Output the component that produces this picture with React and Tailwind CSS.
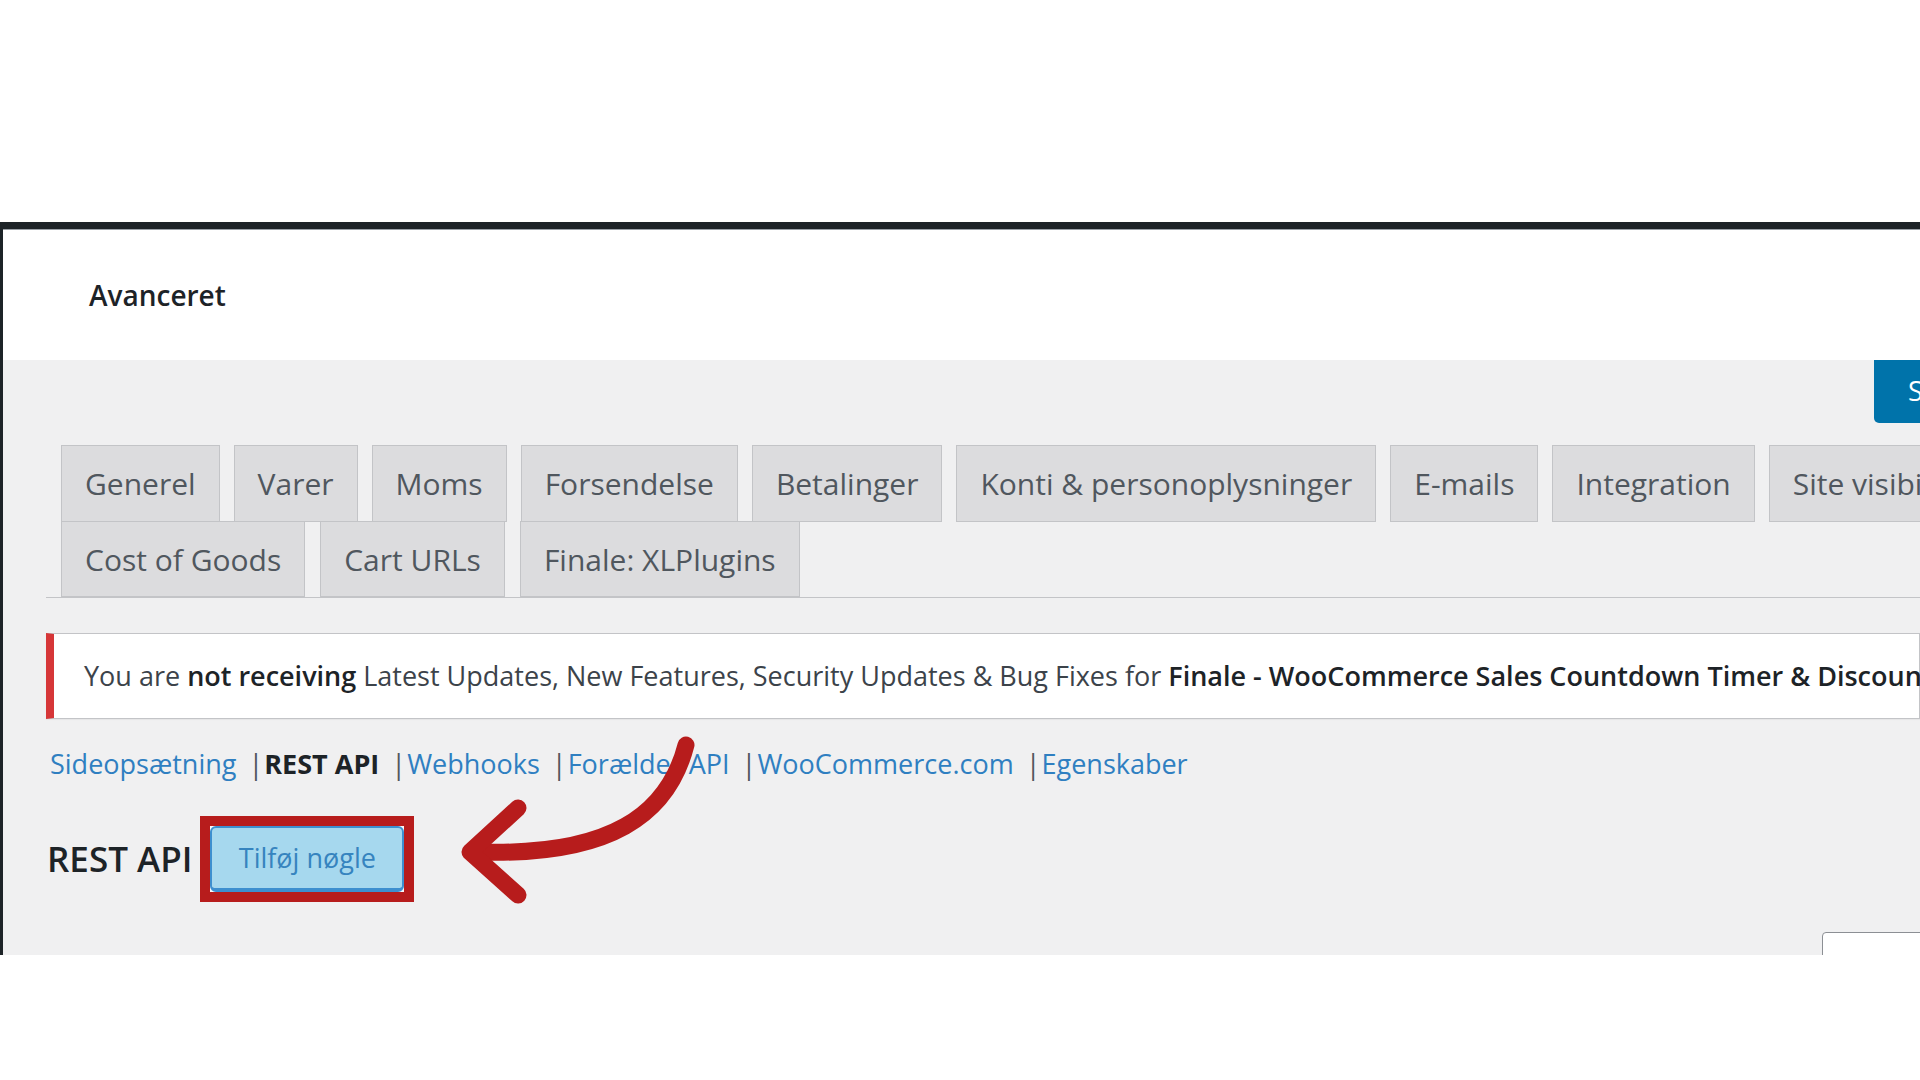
import React from 'react';

const font = { fontFamily: '"Open Sans", "Noto Sans", sans-serif' };

const rowOne = ['Generel', 'Varer', 'Moms', 'Forsendelse', 'Betalinger', 'Konti & personoplysninger', 'E-mails', 'Integration', 'Site visibility'];
const rowTwo = ['Cost of Goods', 'Cart URLs', 'Finale: XLPlugins'];

const links = [
  { label: 'Sideopsætning' },
  { label: 'REST API', current: true },
  { label: 'Webhooks' },
  { label: 'Forælder API' },
  { label: 'WooCommerce.com' },
  { label: 'Egenskaber', last: true },
];

function Tab({ label, tall }) {
  return (
    <div
      className={`flex items-center whitespace-nowrap border border-[#c3c4c7] bg-[#dcdcde] px-[23px] text-[30px] text-[#50575e] ${tall ? 'h-[77px]' : 'h-[76px]'}`}
    >
      {label}
    </div>
  );
}

export default function App() {
  return (
    <div className="relative h-[1080px] w-[1920px] overflow-hidden bg-white" style={font}>
      <div className="h-[222px]" />

      <div className="flex h-[733px] flex-col border-l-[3px] border-t-[7px] border-[#1d2327]">
        {/* header */}
        <div className="flex h-[131px] items-center border-t border-[#9aa0a6] bg-white pl-[86px]">
          <h1 className="text-[28px] font-semibold text-[#1d2327]">Avanceret</h1>
        </div>

        {/* settings area */}
        <div className="flex-1 overflow-hidden bg-[#f0f0f1]">
          <div className="flex h-[63px] justify-end">
            <button className="-mr-[204px] h-[63px] w-[250px] whitespace-nowrap rounded-bl-[5px] bg-[#0073aa] pl-[34px] text-left text-[27px] text-white">
              Save changes
            </button>
          </div>

          {/* tabs */}
          <div className="ml-[43px] mt-[22px] border-b border-[#c3c4c7] pl-[15px]">
            <div className="flex gap-[14px]">
              {rowOne.map((t) => (
                <Tab key={t} label={t} tall />
              ))}
            </div>
            <div className="-mt-px flex gap-[15px]">
              {rowTwo.map((t) => (
                <Tab key={t} label={t} />
              ))}
            </div>
          </div>

          {/* notice */}
          <div className="ml-[43px] mt-[35px] flex h-[86px] items-center whitespace-nowrap border border-l-[8px] border-[#c3c4c7] border-l-[#d63638] bg-white pl-[30px] text-[27px] text-[#3c434a] shadow-[0_1px_1px_rgba(0,0,0,0.04)]">
            <span>
              You are <b className="font-semibold text-[#1d2327]">not receiving</b> Latest Updates, New Features, Security Updates &amp; Bug Fixes for{' '}
              <b className="font-semibold text-[#1d2327]">Finale - WooCommerce Sales Countdown Timer &amp; Discount Plugin</b>
            </span>
          </div>

          {/* sub navigation */}
          <ul className="ml-[47px] mt-[27px] flex h-[36px] items-center text-[27px]">
            {links.map((l) => (
              <li key={l.label} className="flex items-center whitespace-nowrap">
                {l.current ? (
                  <span className="font-bold text-[#1d2327]">{l.label}</span>
                ) : (
                  <a className="text-[#2f7fc1]">{l.label}</a>
                )}
                {!l.last && <span className="ml-[12px] mr-px text-[#50575e]">|</span>}
              </li>
            ))}
          </ul>

          {/* heading + button */}
          <div className="ml-[44px] mt-[34px] flex items-center gap-[8px]">
            <h2 className="text-[35px] font-semibold text-[#1d2327]">REST API</h2>
            <div className="border-[10px] border-[#b71c1c] bg-white/60">
              <button className="flex h-[66px] w-[194px] items-center justify-center rounded-[6px] border-2 border-b-4 border-[#3d8fcf] bg-[#a6d8ee] text-[27px] text-[#3684bf]">
                Tilføj nøgle
              </button>
            </div>
          </div>

          <div className="mt-[30px] flex justify-end">
            <div className="-mr-[12px] h-[40px] w-[110px] rounded-[4px] border border-[#8c8f94] bg-white" />
          </div>
        </div>
      </div>

      {/* annotation arrow */}
      <svg className="pointer-events-none absolute left-0 top-0" width="1920" height="1080" viewBox="0 0 1920 1080">
        <path d="M686 745 C668 815 610 856 480 852" fill="none" stroke="#b71c1c" strokeWidth="17" strokeLinecap="round" />
        <path d="M518 808 L470 852 L518 895" fill="none" stroke="#b71c1c" strokeWidth="17" strokeLinecap="round" strokeLinejoin="round" />
      </svg>
    </div>
  );
}
